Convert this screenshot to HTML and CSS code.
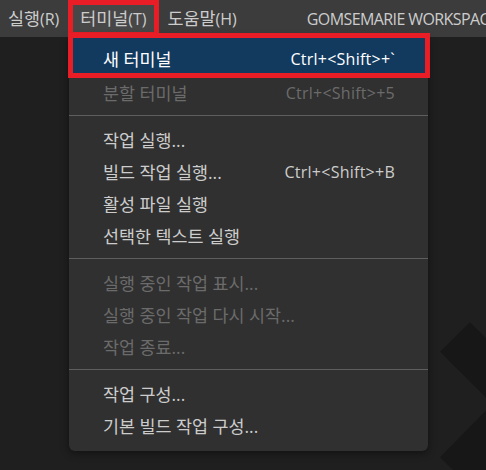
FILE: index.html
```html
<!DOCTYPE html>
<html lang="ko">
<head>
<meta charset="utf-8">
<title>터미널 메뉴</title>
<link rel="stylesheet" href="styles.css">
</head>
<body>
<div class="screen">
  <div class="titlebar">
    <div class="mb-item"><span class="ko">실행</span>(R)</div>
    <div class="mb-item active"><span class="ko">터미널</span>(T)</div>
    <div class="mb-item"><span class="ko">도움말</span>(H)</div>
    <div class="title">GOMSEMARIE WORKSPACE</div>
  </div>

  <svg class="watermark" width="486" height="470" viewBox="0 0 486 470">
    <polyline points="455,337 522,404 455,472" fill="none" stroke="#171717" stroke-width="42" stroke-linejoin="round"/>
  </svg>

  <div class="menu">
    <div class="item hl"><span class="label">새 터미널</span><span class="key">Ctrl+&lt;Shift&gt;+`</span></div>
    <div class="item disabled"><span class="label">분할 터미널</span><span class="key">Ctrl+&lt;Shift&gt;+5</span></div>
    <div class="sep"></div>
    <div class="item"><span class="label">작업 실행...</span></div>
    <div class="item"><span class="label">빌드 작업 실행...</span><span class="key">Ctrl+&lt;Shift&gt;+B</span></div>
    <div class="item"><span class="label">활성 파일 실행</span></div>
    <div class="item"><span class="label">선택한 텍스트 실행</span></div>
    <div class="sep"></div>
    <div class="item disabled"><span class="label">실행 중인 작업 표시...</span></div>
    <div class="item disabled"><span class="label">실행 중인 작업 다시 시작...</span></div>
    <div class="item disabled"><span class="label">작업 종료...</span></div>
    <div class="sep"></div>
    <div class="item"><span class="label">작업 구성...</span></div>
    <div class="item"><span class="label">기본 빌드 작업 구성...</span></div>
  </div>

  <div class="annot"></div>
</div>
</body>
</html>
```

FILE: styles.css
```css
html, body {
  margin: 0;
  padding: 0;
  background: #1f1f1f;
}

.screen {
  position: relative;
  width: 486px;
  height: 470px;
  overflow: hidden;
  background: #1f1f1f;
  font-family: "Open Sans", "Noto Sans CJK KR", sans-serif;
  font-size: 16px;
  color: #cccccc;
}

.titlebar {
  display: flex;
  align-items: center;
  gap: 7px;
  height: 37px;
  padding-left: 1px;
  background: #3c3c3c;
  position: relative;
  z-index: 1;
}

.mb-item {
  height: 27px;
  line-height: 27px;
  padding: 0 7px;
  white-space: nowrap;
  color: #cccccc;
}

.ko {
  font-size: 17.4px;
}

.mb-item.active {
  background: #474747;
  outline: 5px solid #e81d25;
}

.title {
  margin-left: 56px;
  white-space: nowrap;
  letter-spacing: -0.6px;
  color: #cccccc;
}

.watermark {
  position: absolute;
  left: 0;
  top: 0;
}

.menu {
  position: absolute;
  left: 69px;
  top: 37px;
  width: 359px;
  box-sizing: border-box;
  padding: 1px 0 9px;
  background: #303030;
  border-radius: 0 0 6px 6px;
  box-shadow: 0 2px 8px rgba(0, 0, 0, 0.45);
  display: flex;
  flex-direction: column;
  z-index: 2;
}

.item {
  display: flex;
  align-items: center;
  justify-content: space-between;
  height: 32px;
  margin: 0 3px 0 4px;
  padding: 0 30px;
  white-space: nowrap;
  color: #cccccc;
}

.label {
  font-size: 17.4px;
}

.key {
  font-size: 16px;
  letter-spacing: 0.25px;
}

.item.hl {
  padding-top: 4.5px;
  padding-bottom: 2.2px;
  background: #123a5f;
  color: #ffffff;
}

.item.disabled {
  color: #6b6b6b;
}

.sep {
  height: 1px;
  margin: 6px 0 8px;
  background: #5e5e5e;
}

.annot {
  position: absolute;
  left: 68px;
  top: 33px;
  width: 352px;
  height: 35px;
  border: 5px solid #e81d25;
  z-index: 3;
}
```
